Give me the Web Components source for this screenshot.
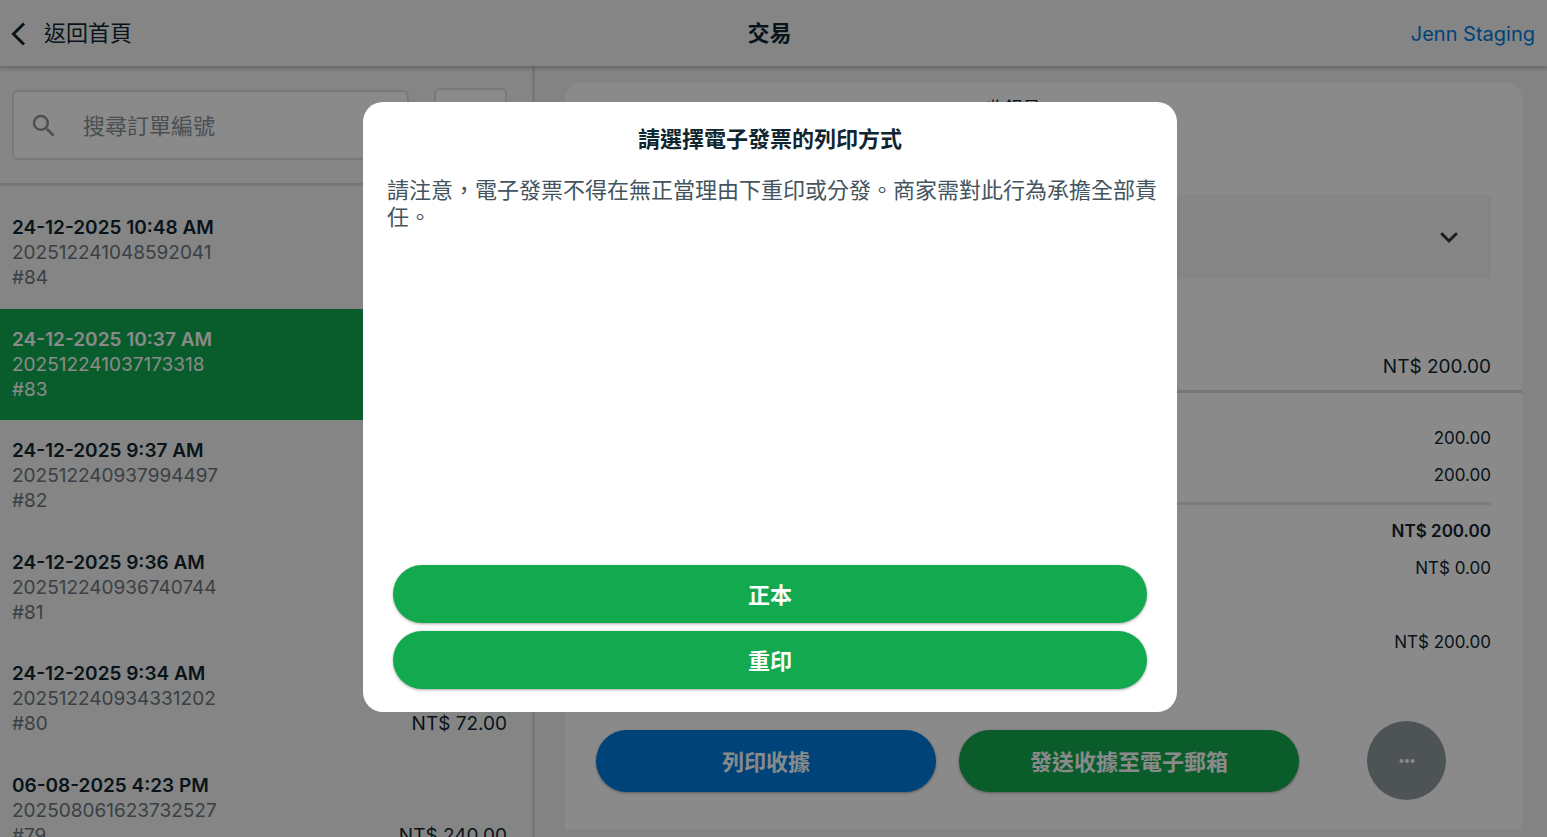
<!DOCTYPE html>
<html lang="zh-Hant">
<head>
<meta charset="utf-8">
<meta name="viewport" content="width=device-width, initial-scale=1">
<title>交易</title>
<style>
  html, body { height: 100%; }
  body {
    margin: 0;
    overflow: hidden;
    font-family: Inter, "Noto Sans CJK TC", sans-serif;
    color: #0f2630;
    background: #f3f3f3;
  }
</style>
</head>
<body>
<pos-app></pos-app>

<template id="pos-app">
  <style>
    :host { display: flex; flex-direction: column; height: 100vh; overflow: hidden; }
    main { flex: 1; min-height: 0; display: flex; }
    order-list { flex: 0 0 532px; border-right: 3px solid #dadada; }
    order-detail { flex: 1; min-width: 0; }
  </style>
  <app-header account="Jenn Staging">
    <span slot="back">返回首頁</span>
    <span slot="title">交易</span>
  </app-header>
  <main>
    <order-list>
      <order-item date="24-12-2025 10:48 AM" number="202512241048592041" tag="#84"></order-item>
      <order-item date="24-12-2025 10:37 AM" number="202512241037173318" tag="#83" active></order-item>
      <order-item date="24-12-2025 9:37 AM" number="202512240937994497" tag="#82"></order-item>
      <order-item date="24-12-2025 9:36 AM" number="202512240936740744" tag="#81"></order-item>
      <order-item date="24-12-2025 9:34 AM" number="202512240934331202" tag="#80" amount="NT$ 72.00"></order-item>
      <order-item date="06-08-2025 4:23 PM" number="202508061623732527" tag="#79" amount="NT$ 240.00"></order-item>
    </order-list>
    <order-detail></order-detail>
  </main>
  <print-dialog>
    <span slot="title">請選擇電子發票的列印方式</span>
    請注意，電子發票不得在無正當理由下重印或分發。商家需對此行為承擔全部責任。
    <pill-button slot="actions">正本</pill-button>
    <pill-button slot="actions">重印</pill-button>
  </print-dialog>
</template>

<template id="app-header">
  <style>
    :host {
      display: grid; grid-template-columns: 1fr auto 1fr; align-items: center;
      height: 66px; flex: none; padding: 0 12px 0 4px; position: relative; z-index: 1;
      box-sizing: border-box; background: #f6f6f6; font-size: 22px; line-height: 32px;
      box-shadow: 0 2px 4px 1px rgba(0, 0, 0, .2);
    }
    button { display: flex; align-items: center; gap: 12px; justify-self: start; margin: 0; padding: 0;
      border: 0; background: none; font: inherit; color: inherit; }
    h1 { margin: 0; font-size: 22px; font-weight: 600; }
    a { justify-self: end; padding-top: 2px; color: #007ce0; text-decoration: none; font-size: 20px; font-variation-settings: "opsz" 32; }
    svg { display: block; }
  </style>
  <button type="button">
    <svg width="28" height="28" viewBox="0 0 28 28" fill="none" stroke="currentColor" stroke-width="3"><path d="M20 4.500 9.500 15 20 25.500"/></svg>
    <slot name="back"></slot>
  </button>
  <h1><slot name="title"></slot></h1>
  <a href="#account"></a>
</template>

<template id="order-list">
  <style>
    :host { display: block; overflow: hidden; background: #f6f6f6; }
    .tools { display: flex; align-items: center; gap: 25px; height: 117px; box-sizing: border-box;
      padding: 0 25px 0 12px; }
    .search { flex: 1; min-width: 0; display: flex; align-items: center; gap: 24px; height: 70px; box-sizing: border-box;
      padding: 2px 16px 0 15px; border: 2px solid #e0e0e0; border-radius: 6px; background: #fff; }
    .search svg { flex: none; color: #8a9296; }
    input { flex: 1; min-width: 0; border: 0; padding: 0; outline: 0; background: none; font: inherit; font-size: 22px; color: inherit; }
    input::placeholder { color: #8a9296; opacity: 1; }
    .filter { flex: none; width: 73px; height: 74px; box-sizing: border-box; border: 2px solid #e0e0e0; border-radius: 6px; background: #fff; padding: 0; }
    .rows { display: grid; grid-auto-rows: 1fr; height: 669px; border-top: 3px solid #dadada; padding-top: 11px; }
  </style>
  <div class="tools">
    <label class="search">
      <svg width="30" height="30" viewBox="0 0 24 24" fill="currentColor"><path d="M15.500 14h-.79l-.28-.27A6.470 6.470 0 0 0 16 9.500 6.500 6.500 0 1 0 9.500 16c1.610 0 3.090-.59 4.230-1.570l.27.28v.79l5 4.990L20.490 19l-4.990-5zm-6 0C7.010 14 5 11.990 5 9.500S7.010 5 9.500 5 14 7.010 14 9.500 11.990 14 9.500 14z"/></svg>
      <input type="search" placeholder="搜尋訂單編號" aria-label="搜尋訂單編號">
    </label>
    <button class="filter" type="button" aria-label="篩選"></button>
  </div>
  <div class="rows" role="list"><slot></slot></div>
</template>

<template id="order-item">
  <style>
    :host { display: flex; align-items: center; padding: 0 25px 0 12px; font-size: 19px; line-height: 25px; color: #6b777c; }
    :host([active]) { background: #11ab50; color: #fff; }
    .text { flex: 1; display: grid; }
    strong { font-weight: 600; color: #0f2630; }
    :host([active]) strong { color: inherit; }
    .amount { align-self: center; padding-top: 50px; color: #0f2630; }
  </style>
  <div class="text"><strong></strong><span class="number"></span><span class="tag"></span></div>
  <span class="amount"></span>
</template>

<template id="order-detail">
  <style>
    :host { display: flex; padding: 17px 25px 7px 30px; box-sizing: border-box; }
    article { flex: 1; display: flex; flex-direction: column; border-radius: 16px 16px 0 0; background: #fff; }
    .cashier { display: flex; justify-content: center; gap: 60px; height: 112px; box-sizing: border-box; padding-top: 12px; font-size: 18px; line-height: 28px; }
    .invoice { display: flex; justify-content: flex-end; align-items: center; height: 84px; margin: 0 31px;
      padding: 0 27px; border: 0; background: #f6f6f6; color: #33373d; }
    .total { height: 114px; box-sizing: border-box; padding: 75px 31px 0; border-bottom: 3px solid #dadada; text-align: right; font-size: 19px; line-height: 26px; }
    .lines { margin: 0 31px; padding: 27px 0 8px; border-bottom: 3px solid #e6e6e6; }
    .sums { margin: 0 31px; padding: 8px 0; flex: 1; }
    amount-line.gap { padding-top: 37px; }
    .actions { display: flex; align-items: center; gap: 23px; padding: 0 76px 30px 31px; }
    .actions pill-button { flex: 0 1 340px; --pill-height: 62px; }
    .blue { --pill-color: #007ce0; }
    .more { flex: none; width: 79px; height: 79px; margin-left: auto; padding: 0; border: 0; border-radius: 50%; background: #909a9f; color: #fff; }
    svg { display: block; }
    .more svg { margin: auto; }
  </style>
  <article>
    <div class="cashier"><span>收銀員</span><span></span></div>
    <button class="invoice" type="button" aria-label="展開">
      <svg width="30" height="30" viewBox="0 0 30 30" fill="none" stroke="currentColor" stroke-width="3" stroke-linecap="round"><path d="m8 12 7 7 7-7"/></svg>
    </button>
    <div class="total">NT$ 200.00</div>
    <div class="lines">
      <amount-line>200.00</amount-line>
      <amount-line>200.00</amount-line>
    </div>
    <div class="sums">
      <amount-line strong>NT$ 200.00</amount-line>
      <amount-line>NT$ 0.00</amount-line>
      <amount-line class="gap">NT$ 200.00</amount-line>
    </div>
    <div class="actions">
      <pill-button class="blue">列印收據</pill-button>
      <pill-button>發送收據至電子郵箱</pill-button>
      <button class="more" type="button" aria-label="更多">
        <svg width="18" height="6" viewBox="0 0 18 6" fill="currentColor"><circle cx="3.500" cy="3" r="2"/><circle cx="9" cy="3" r="2"/><circle cx="14.500" cy="3" r="2"/></svg>
      </button>
    </div>
  </article>
</template>

<template id="amount-line">
  <style>
    :host { display: block; text-align: right; font-size: 17px; line-height: 37px; }
    :host([strong]) { font-weight: 600; }
  </style>
  <slot></slot>
</template>

<template id="pill-button">
  <style>
    :host { display: block; }
    button { display: block; width: 100%; height: var(--pill-height, 58px); margin: 0; padding: 0 24px 2px; border: 0;
      border-radius: 31px; background: var(--pill-color, #13aa4f); color: #fff; font: inherit; font-size: 22px; font-weight: 600;
      box-shadow: 0 1px 3px rgba(0, 0, 0, .35); }
  </style>
  <button type="button"><slot></slot></button>
</template>

<template id="print-dialog">
  <style>
    :host { display: flex; position: fixed; inset: 0; z-index: 10; align-items: center; justify-content: center;
      padding: 0 7px 23px 0; background: rgba(0, 0, 0, .46); }
    dialog { display: flex; flex-direction: column; position: static; flex: 0 1 814px; min-height: 610px; margin: 0; padding: 0 16px 23px;
      box-sizing: border-box; border: 0; border-radius: 20px; background: #fff; color: #0f2630; }
    h2 { margin: 21px 0 22px; text-align: center; font-size: 22px; line-height: 32px; font-weight: 600; }
    p { margin: 0; padding-left: 8px; flex: 1; font-size: 22px; line-height: 27px; color: #44545c; }
    .actions { display: grid; gap: 8px; padding: 0 14px; }
  </style>
  <dialog open aria-labelledby="title">
    <h2 id="title"><slot name="title"></slot></h2>
    <p><slot></slot></p>
    <div class="actions"><slot name="actions"></slot></div>
  </dialog>
</template>

<script>
  class TemplateElement extends HTMLElement {
    constructor() {
      super();
      const template = document.getElementById(this.localName);
      this.attachShadow({ mode: 'open' }).append(template.content.cloneNode(true));
    }
    fill(selector, attribute) {
      this.shadowRoot.querySelector(selector).textContent = this.getAttribute(attribute) || '';
    }
  }
  class AppHeader extends TemplateElement {
    connectedCallback() { this.fill('a', 'account'); }
  }
  class OrderItem extends TemplateElement {
    connectedCallback() {
      this.setAttribute('role', 'listitem');
      this.fill('strong', 'date');
      this.fill('.number', 'number');
      this.fill('.tag', 'tag');
      this.fill('.amount', 'amount');
    }
  }
  customElements.define('pill-button', class extends TemplateElement {});
  customElements.define('amount-line', class extends TemplateElement {});
  customElements.define('app-header', AppHeader);
  customElements.define('order-item', OrderItem);
  customElements.define('order-list', class extends TemplateElement {});
  customElements.define('order-detail', class extends TemplateElement {});
  customElements.define('print-dialog', class extends TemplateElement {});
  customElements.define('pos-app', class extends TemplateElement {});
</script>
</body>
</html>
